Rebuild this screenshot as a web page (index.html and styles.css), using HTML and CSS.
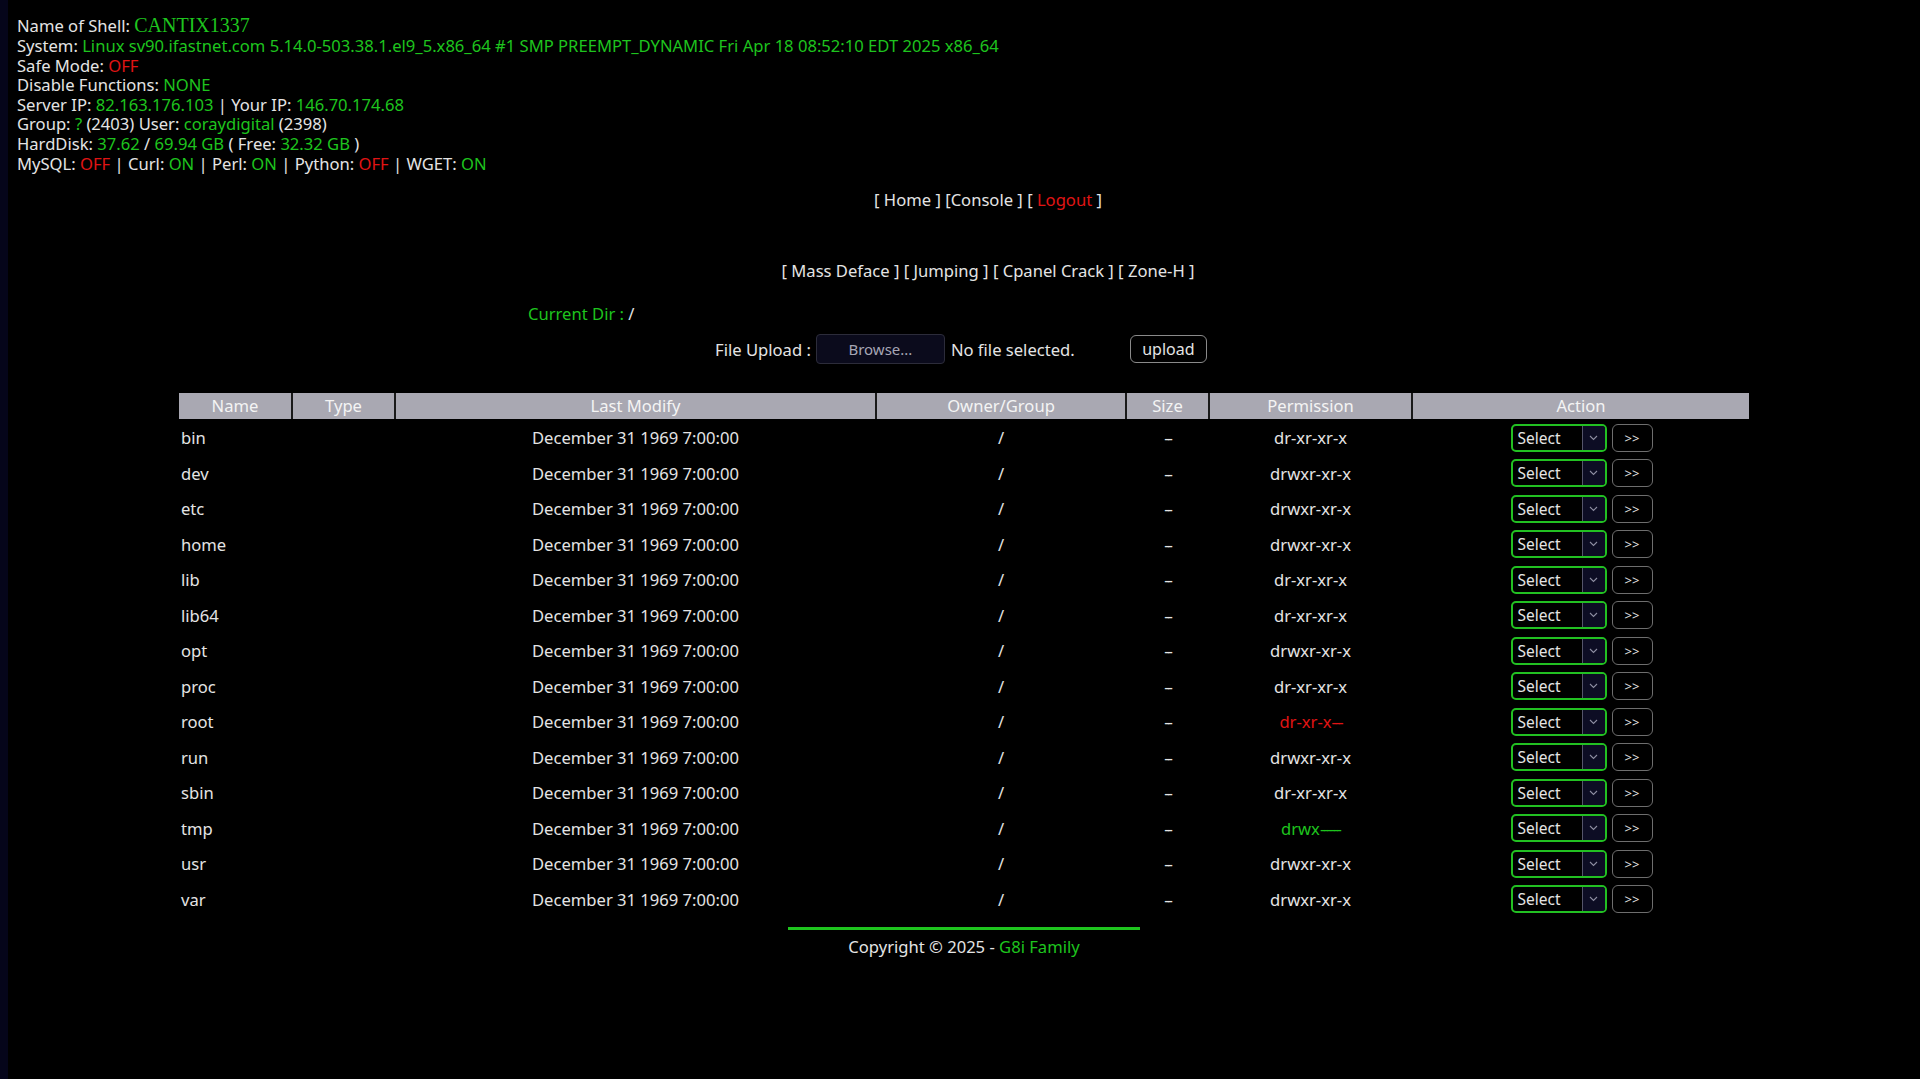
FILE: index.html
```html
<!DOCTYPE html>
<html>
<head>
<meta charset="utf-8">
<title>CANTIX1337</title>
<link rel="stylesheet" href="styles.css">
</head>
<body>
<div class="page">
  <div class="info">
    <div class="line first">Name of Shell: <span class="shell">CANTIX1337</span></div>
    <div class="line">System: <span class="g">Linux sv90.ifastnet.com 5.14.0-503.38.1.el9_5.x86_64 #1 SMP PREEMPT_DYNAMIC Fri Apr 18 08:52:10 EDT 2025 x86_64</span></div>
    <div class="line">Safe Mode: <span class="r">OFF</span></div>
    <div class="line">Disable Functions: <span class="g">NONE</span></div>
    <div class="line">Server IP: <span class="g">82.163.176.103</span> | Your IP: <span class="g">146.70.174.68</span></div>
    <div class="line">Group: <span class="g">?</span> (2403) User: <span class="g">coraydigital</span> (2398)</div>
    <div class="line">HardDisk: <span class="g">37.62</span> / <span class="g">69.94 GB</span> ( Free: <span class="g">32.32 GB</span> )</div>
    <div class="line">MySQL: <span class="r">OFF</span> | Curl: <span class="g">ON</span> | Perl: <span class="g">ON</span> | Python: <span class="r">OFF</span> | WGET: <span class="g">ON</span></div>
  </div>

  <nav class="menu menu-main">[ <a href="#">Home</a> ] [<a href="#">Console</a> ] [ <a href="#" class="r">Logout</a> ]</nav>
  <nav class="menu menu-tools">[ <a href="#">Mass Deface</a> ] [ <a href="#">Jumping</a> ] [ <a href="#">Cpanel Crack</a> ] [ <a href="#">Zone-H</a> ]</nav>

  <div class="curdir"><span class="g">Current Dir : </span><a href="#">/</a></div>

  <form class="upload">
    <span class="upload-label">File Upload :</span>
    <span class="browse">Browse...</span>
    <span class="nofile">No file selected.</span>
    <button type="button" class="upload-btn">upload</button>
  </form>

  <table class="files">
    <thead>
      <tr>
        <th class="c-name">Name</th>
        <th class="c-type">Type</th>
        <th class="c-mod">Last Modify</th>
        <th class="c-own">Owner/Group</th>
        <th class="c-size">Size</th>
        <th class="c-perm">Permission</th>
        <th class="c-act">Action</th>
      </tr>
    </thead>
    <tbody id="rows"></tbody>
  </table>

  <div class="footer">
    <div class="footer-line"></div>
    <div class="copy">Copyright © 2025 - <span class="g">G8i Family</span></div>
  </div>
</div>
<script src="app.js"></script>
</body>
</html>
```

FILE: app.js
```js
const rows = [
  ["bin", "dr-xr-xr-x", ""],
  ["dev", "drwxr-xr-x", ""],
  ["etc", "drwxr-xr-x", ""],
  ["home", "drwxr-xr-x", ""],
  ["lib", "dr-xr-xr-x", ""],
  ["lib64", "dr-xr-xr-x", ""],
  ["opt", "drwxr-xr-x", ""],
  ["proc", "dr-xr-xr-x", ""],
  ["root", "dr-xr-x---", "r"],
  ["run", "drwxr-xr-x", ""],
  ["sbin", "dr-xr-xr-x", ""],
  ["tmp", "drwx------", "g"],
  ["usr", "drwxr-xr-x", ""],
  ["var", "drwxr-xr-x", ""]
];
const chevron = '<svg width="9" height="6" viewBox="0 0 9 6"><path d="M1 1 L4.5 4.5 L8 1" fill="none" stroke="#8c8ca0" stroke-width="1.1"/></svg>';
const perm = p => p.replace(/(-{2,})$/, '<span class="dash">$1</span>');
document.getElementById("rows").innerHTML = rows.map(r => `
<tr>
  <td class="c-name"><a href="#">${r[0]}</a></td>
  <td></td>
  <td class="center">December 31 1969 7:00:00</td>
  <td class="center">/</td>
  <td class="center"><span class="dash">--</span></td>
  <td class="center"><span class="${r[2]}">${perm(r[1])}</span></td>
  <td class="center">
    <div class="act">
      <div class="sel"><span class="sel-text">Select</span><span class="sel-arrow">${chevron}</span></div>
      <button type="button" class="go">&gt;&gt;</button>
    </div>
  </td>
</tr>`).join("");
```

FILE: styles.css
```css
html, body {
  margin: 0;
  padding: 0;
  background: #000;
}
body {
  border-left: 8px solid #05051a;
  min-height: 1079px;
  box-sizing: border-box;
  color: #e4e4e4;
  font-family: "Noto Sans", "DejaVu Sans", sans-serif;
  font-size: 16.6px;
}
a {
  color: inherit;
  text-decoration: none;
}
.g { color: #1ec41e; }
.r { color: #e01414; }
.dash { letter-spacing: -2px; }

.page {
  display: flex;
  flex-direction: column;
}

.info {
  padding: 14px 0 0 9px;
}
.line {
  line-height: 19.6px;
  height: 19.6px;
  white-space: nowrap;
}
.line.first {
  height: 22px;
  line-height: 22px;
}
.shell {
  color: #1ec41e;
  font-family: "Liberation Serif", serif;
  font-size: 20px;
}

.menu {
  text-align: center;
  padding-left: 48px;
  line-height: 20px;
}
.menu-main { margin-top: 17px; }
.menu-tools { margin-top: 51px; }

.curdir {
  margin-top: 23px;
  padding-left: 520px;
  line-height: 20px;
}

.upload {
  margin: 10px 0 0;
  display: flex;
  justify-content: center;
  align-items: center;
  padding-right: 6px;
}
.upload-label {
  margin-right: 5px;
}
.browse {
  width: 129px;
  height: 30px;
  box-sizing: border-box;
  display: flex;
  align-items: center;
  justify-content: center;
  background: #0b0b1c;
  border: 1px solid #2c2c3a;
  border-radius: 4px;
  color: #a6a6b4;
  font-size: 15px;
}
.nofile {
  margin-left: 6px;
  width: 179px;
}
.upload-btn {
  width: 77px;
  height: 28px;
  background: #000;
  color: #e4e4e4;
  border: 1px solid #8a8a8a;
  border-radius: 6px;
  font-family: inherit;
  font-size: 16px;
  padding: 0;
}

.files {
  width: 1570px;
  margin: 29px auto 0;
  border-collapse: collapse;
  table-layout: fixed;
}
.files th {
  background: #a9a8b2;
  color: #f4f4f4;
  font-weight: normal;
  height: 26px;
  padding: 0;
  border-right: 2px solid #1a1a1a;
  line-height: 26px;
}
.files th:last-child { border-right: 0; }
.c-name { width: 112px; }
.c-type { width: 101px; }
.c-mod { width: 479px; }
.c-own { width: 248px; }
.c-size { width: 81px; }
.c-perm { width: 201px; }
.c-act { width: auto; }
.files td {
  height: 35.5px;
  padding: 0;
}
.files td.c-name {
  padding-left: 2px;
  text-align: left;
}
.files td.center { text-align: center; }
.files tbody tr:first-child td { padding-top: 1px; }

.act {
  display: flex;
  justify-content: center;
  gap: 5px;
  padding-left: 2px;
}
.sel {
  width: 96px;
  height: 28px;
  box-sizing: border-box;
  border: 2px solid #22c022;
  border-radius: 5px;
  display: flex;
  overflow: hidden;
  background: #000;
}
.sel-text {
  flex: 1;
  text-align: left;
  padding-left: 5px;
  line-height: 24px;
  font-size: 15.5px;
}
.sel-arrow {
  width: 22px;
  background: #0d0d24;
  border-left: 1px solid #55556a;
  display: flex;
  align-items: center;
  justify-content: center;
}
.go {
  width: 41px;
  height: 28px;
  background: #000;
  color: #e4e4e4;
  border: 1px solid #6e6e6e;
  border-radius: 6px;
  font-family: inherit;
  font-size: 13px;
  padding: 0;
}

.footer {
  display: flex;
  flex-direction: column;
  align-items: center;
  margin-top: 10px;
}
.footer-line {
  width: 352px;
  height: 3px;
  background: #1ec41e;
}
.copy {
  margin-top: 7px;
  line-height: 20px;
}
```
